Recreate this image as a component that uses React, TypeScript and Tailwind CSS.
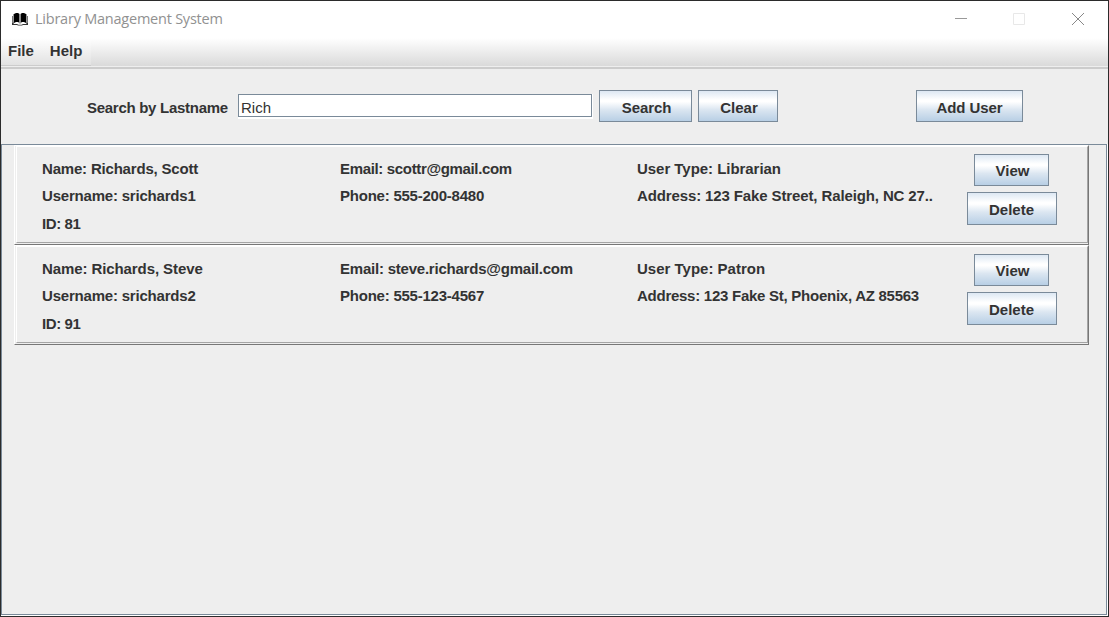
import type { ReactNode } from 'react';

interface Field {
  text: string;
  tracking: string;
}

interface User {
  id: number;
  fields: Field[];
}

const users: User[] = [
  {
    id: 81,
    fields: [
      { text: 'Name: Richards, Scott', tracking: 'tracking-[-0.19px]' },
      { text: 'Email: scottr@gmail.com', tracking: 'tracking-[-0.34px]' },
      { text: 'User Type: Librarian', tracking: 'tracking-[-0.04px]' },
      { text: 'Username: srichards1', tracking: 'tracking-[-0.2px]' },
      { text: 'Phone: 555-200-8480', tracking: 'tracking-[-0.23px]' },
      { text: 'Address: 123 Fake Street, Raleigh, NC 27..', tracking: 'tracking-[-0.12px]' },
      { text: 'ID: 81', tracking: 'tracking-[-0.4px]' },
    ],
  },
  {
    id: 91,
    fields: [
      { text: 'Name: Richards, Steve', tracking: 'tracking-[-0.09px]' },
      { text: 'Email: steve.richards@gmail.com', tracking: 'tracking-[-0.22px]' },
      { text: 'User Type: Patron', tracking: 'tracking-normal' },
      { text: 'Username: srichards2', tracking: 'tracking-[-0.2px]' },
      { text: 'Phone: 555-123-4567', tracking: 'tracking-[-0.23px]' },
      { text: 'Address: 123 Fake St, Phoenix, AZ 85563', tracking: 'tracking-[-0.26px]' },
      { text: 'ID: 91', tracking: 'tracking-[-0.4px]' },
    ],
  },
];

function MetalButton({ className, children }: { className: string; children: ReactNode }) {
  return (
    <button
      className={`flex shrink-0 items-center justify-center border border-[#7a8a99] bg-[linear-gradient(to_bottom,#dde8f3_0%,#ffffff_30%,#ffffff_36%,#dbe6f1_62%,#b8cfe5_100%)] text-[15px] leading-4 font-bold ${className}`}
    >
      {children}
    </button>
  );
}

function TitleBar() {
  return (
    <header className="flex h-[37px] items-start bg-white">
      <svg className="mt-[11px] ml-[11px] shrink-0" width="16" height="14" viewBox="0 0 16 14">
        <path d="M0 4h2v8H0zM14 4h2v8h-2z" fill="#777" />
        <path d="M2 2 4 1h2l1.5 1v9L6 10H4l-2 1zM14 2l-2-1h-2L8.5 2v9l1.5-1h2l2 1z" fill="#000" />
        <path d="M1 2h1v8H1zM14 2h1v8h-1zM7.5 2h1v10h-1z" fill="#999" />
        <path d="M0 11h1v1h4l1.5.8h3L11 12h4v-1h1v2h-5l-1 .5H6L5 13H0z" fill="#333" />
      </svg>
      <h1 className="mt-2 ml-[7px] text-[14.5px] leading-5 font-normal tracking-[-0.23px] whitespace-nowrap text-[#919191] [font-family:'Open_Sans','Noto_Sans',sans-serif]">
        Library Management System
      </h1>
      <svg className="mt-[11px] mr-[23px] ml-auto shrink-0" width="130" height="14" viewBox="0 0 130 14" fill="none">
        <path d="M0 6.5h12" stroke="#999" />
        <path d="M58.5 1.5h11v11h-11z" stroke="#e8e8e8" />
        <path d="M117 1l12 12M129 1l-12 12" stroke="#888" />
      </svg>
    </header>
  );
}

function MenuBar() {
  return (
    <nav className="h-[31px] border-b-2 border-[#ccc] bg-[#eee] pb-px text-[15px] leading-[26px] font-bold">
      <div className="flex h-7 bg-linear-to-b from-white to-[#dadada]">
        <div className="flex h-7 w-[90px] gap-4 border-b border-[#ccc] bg-linear-to-b from-white to-[#e2e2e2] pl-[7px]">
          <span>File</span>
          <span>Help</span>
        </div>
      </div>
    </nav>
  );
}

function UserCard({ user }: { user: User }) {
  return (
    <li className="h-[100px] border-t border-r border-b border-l border-t-white border-r-[#777] border-b-[#777] border-l-white pb-px pl-px">
      <div className="flex h-full border-t border-r border-b border-l border-t-white border-r-[#a5a5a5] border-b-[#a5a5a5] border-l-white pl-[25px]">
        <div className="grid h-[82px] grid-cols-[298px_297px_329px] grid-rows-[27px_28px_27px] pt-2 text-[15px] leading-[27px] font-bold whitespace-nowrap">
          {user.fields.map((field) => (
            <span key={field.text} className={field.tracking}>
              {field.text}
            </span>
          ))}
        </div>
        <div className="flex w-[92px] flex-col items-center gap-1.5 pt-[7px]">
          <MetalButton className="mr-px h-8 w-[75px] pt-px pl-0.5">View</MetalButton>
          <MetalButton className="h-[33px] w-[90px] pt-0.5 pr-px">Delete</MetalButton>
        </div>
      </div>
    </li>
  );
}

export default function App() {
  return (
    <div className="flex h-[617px] w-[1109px] flex-col overflow-hidden border border-[#2b2b2b] bg-[#eee] text-[#333] [font-family:'Liberation_Sans',Arial,sans-serif]">
      <TitleBar />
      <MenuBar />
      <div className="flex h-[75px] shrink-0 items-start pt-[21px] pl-[86px]">
        <label
          htmlFor="lastname"
          className="mt-2 w-[151px] text-[15px] leading-5 font-bold tracking-[-0.28px] whitespace-nowrap"
        >
          Search by Lastname
        </label>
        <div className="mt-1 mr-1.5 border-r border-b-2 border-r-white border-b-white">
          <input
            id="lastname"
            defaultValue="Rich"
            className="block h-[23px] w-[354px] border border-[#7a8a99] bg-white px-0.5 pt-[3px] text-[15px] leading-5 outline-none"
          />
        </div>
        <MetalButton className="mr-1.5 h-8 w-[93px] pt-[3px] pl-0.5 tracking-[-0.1px]">Search</MetalButton>
        <MetalButton className="h-8 w-20 pt-[3px] pl-0.5">Clear</MetalButton>
        <MetalButton className="mr-[85px] ml-auto h-8 w-[107px] pt-[3px] tracking-[-0.1px]">Add User</MetalButton>
      </div>
      <main className="flex-1 border-r border-b border-white">
        <div className="h-full border border-[#7a8a99]">
          <ul className="ml-3 w-[1075px]">
            {users.map((user) => (
              <UserCard key={user.id} user={user} />
            ))}
          </ul>
        </div>
      </main>
    </div>
  );
}
